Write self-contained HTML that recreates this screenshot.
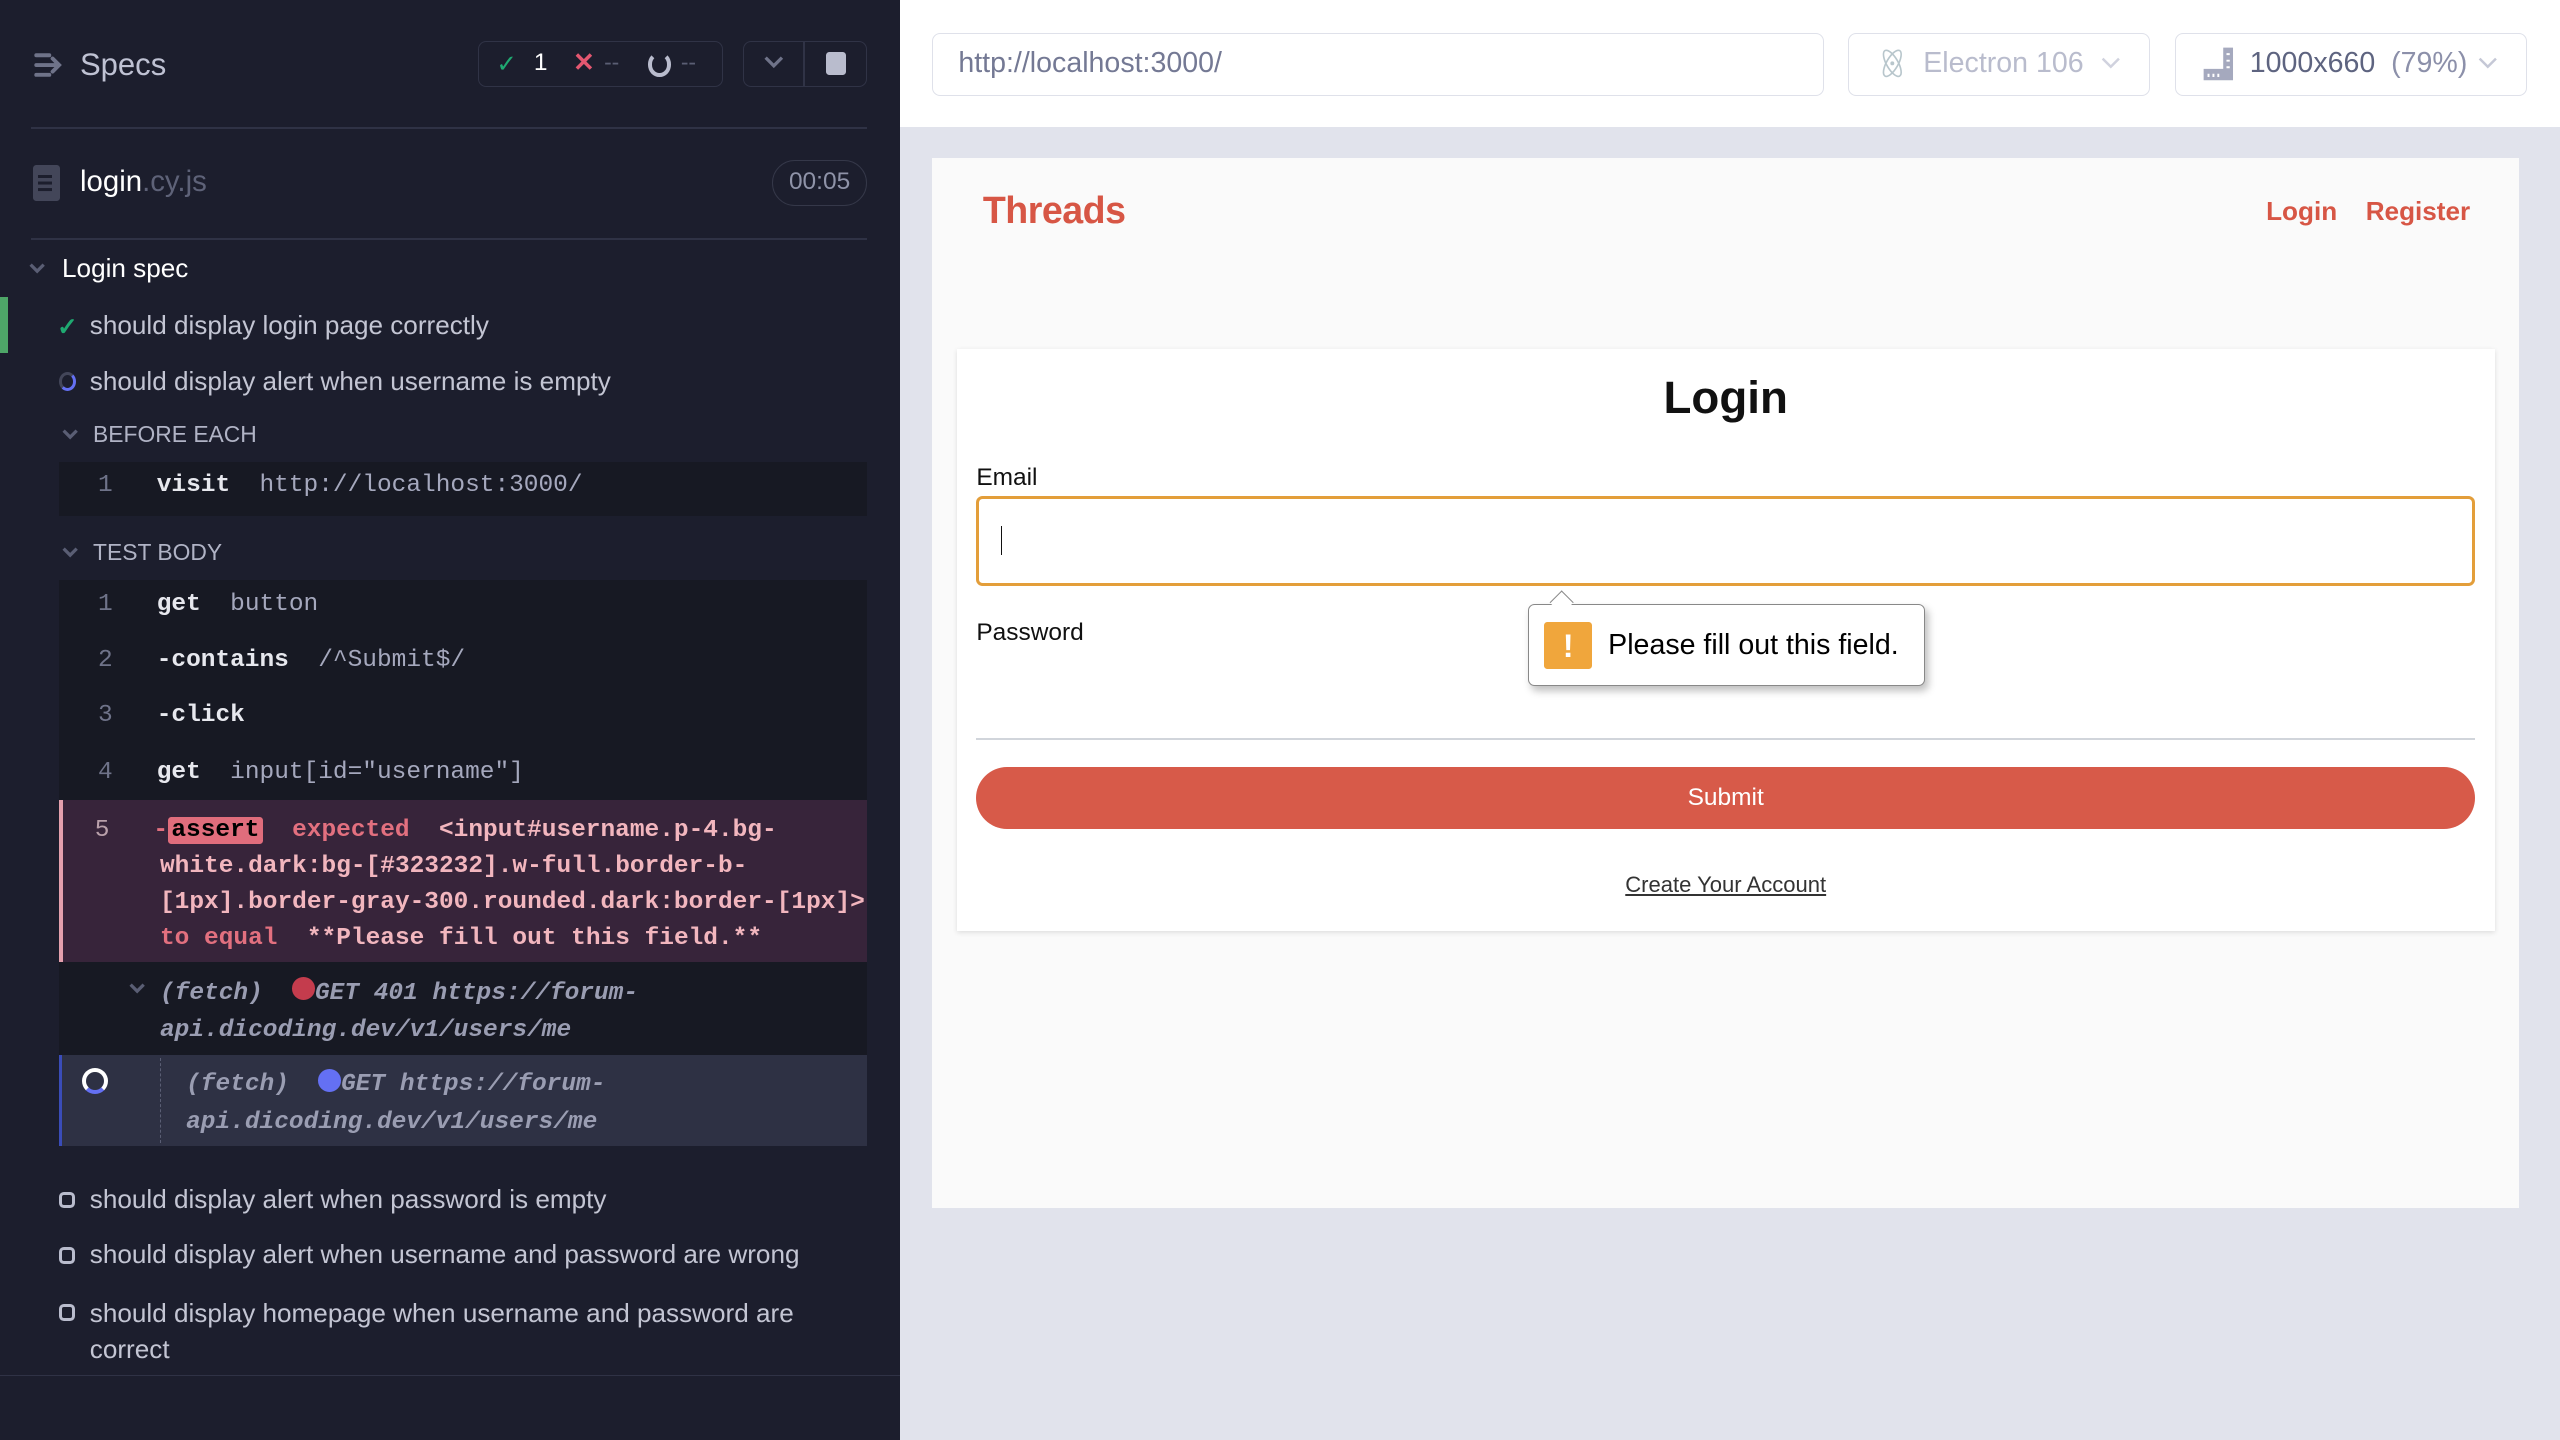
<!DOCTYPE html>
<html><head><meta charset="utf-8"><style>
html,body{margin:0;padding:0;width:2560px;height:1440px;overflow:hidden;background:#1b1e2e}
#w{position:relative;width:1568px;height:882px;zoom:1.632653;font-family:"Liberation Sans",sans-serif;overflow:hidden}
.a{position:absolute}
.left{left:0;top:0;width:551px;height:882px;background:#1c1e2d}
.t{color:#c3c5d3;font-size:16px;white-space:nowrap}
.mono{font-family:"Liberation Mono",monospace;font-size:15px;font-weight:bold;white-space:nowrap}
.row{left:36px;width:495px;background:#171923}
.ln{color:#6f7389;font-weight:normal}
.cmd{color:#e7e8ee}
.arg{color:#a5a8bd;font-weight:normal}
.box{width:10px;height:10px;border:2px solid #b9bccd;border-radius:3px;box-sizing:border-box}
</style></head><body><div id="w">
<div class="a left"></div>
<svg class="a" style="left:20px;top:32px" width="20" height="16" viewBox="0 0 20 16"><g stroke="#6f7389" stroke-width="2.4" stroke-linecap="round" fill="none"><path d="M2 2h8M2 8h13M2 14h8M12 4l4 4-4 4"/></g></svg>
<div class="a t" style="left:49px;top:29px;font-size:19px;color:#bfc2d3">Specs</div>
<div class="a" style="left:293px;top:25px;width:150px;height:28px;border:1px solid #303346;border-radius:5px;box-sizing:border-box"></div>
<div class="a" style="left:304px;top:30px;color:#1fa971;font-size:15px">✓</div>
<div class="a" style="left:327px;top:30px;color:#fff;font-size:15px">1</div>
<div class="a" style="left:351px;top:29px;color:#e45770;font-size:16px;font-weight:bold">✕</div>
<div class="a" style="left:370px;top:30px;color:#5a5e74;font-size:14px">--</div>
<div class="a" style="left:397px;top:32px;width:9px;height:10px;border:2.5px solid #b9bccd;border-radius:50%;border-top-color:transparent"></div>
<div class="a" style="left:417px;top:30px;color:#5a5e74;font-size:14px">--</div>
<div class="a" style="left:455px;top:25px;width:76px;height:28px;border:1px solid #303346;border-radius:5px;box-sizing:border-box"></div>
<div class="a" style="left:492px;top:25px;width:1px;height:28px;background:#303346"></div>
<svg class="a" style="left:468px;top:34px" width="12" height="9"><path d="M1 1l5 5 5-5" stroke="#6f7389" stroke-width="2" fill="none"/></svg>
<div class="a" style="left:506px;top:32px;width:12px;height:14px;background:#b9bccd;border-radius:2px"></div>
<div class="a" style="left:19px;top:78px;width:512px;height:1px;background:#2f3245"></div>
<div class="a" style="left:20px;top:101px;width:17px;height:22px;background:#434659;border-radius:2px"></div>
<div class="a" style="left:23px;top:107px;width:9px;height:2px;background:#1c1e2d;box-shadow:0 4px 0 #1c1e2d,0 8px 0 #1c1e2d"></div>
<div class="a" style="left:49px;top:101px;font-size:18px;color:#fff">login<span style="color:#5e6278">.cy.js</span></div>
<div class="a" style="left:473px;top:98px;width:58px;height:28px;border:1px solid #353849;border-radius:14px;box-sizing:border-box;color:#8f93a8;font-size:15px;text-align:center;line-height:26px">00:05</div>
<div class="a" style="left:19px;top:146px;width:512px;height:1px;background:#2f3245"></div>
<svg class="a" style="left:18px;top:161px" width="10" height="7"><path d="M1 1l4 4 4-4" stroke="#5a5e74" stroke-width="2" fill="none"/></svg>
<div class="a t" style="left:38px;top:155px;font-size:16px;color:#fff">Login spec</div>
<div class="a" style="left:0;top:182px;width:5px;height:34px;background:#4ea668"></div>
<div class="a" style="left:35px;top:191px;color:#1fa971;font-size:15px;font-weight:bold">✓</div>
<div class="a t" style="left:55px;top:190px">should display login page correctly</div>
<div class="a" style="left:36px;top:228px;width:7px;height:8px;border:2px solid #434659;border-radius:50%;border-right-color:#6470f3;border-bottom-color:#6470f3"></div>
<div class="a t" style="left:55px;top:224px">should display alert when username is empty</div>
<svg class="a" style="left:38px;top:263px" width="10" height="7"><path d="M1 1l4 4 4-4" stroke="#5a5e74" stroke-width="2" fill="none"/></svg>
<div class="a t" style="left:57px;top:258px;font-size:14px;color:#b0b3c5">BEFORE EACH</div>
<div class="a row" style="top:283px;height:33px"></div>
<div class="a mono" style="left:60px;top:289px"><span class="ln">1</span>&nbsp;&nbsp;&nbsp;<span class="cmd">visit</span>&nbsp;&nbsp;<span class="arg">http://localhost:3000/</span></div>
<svg class="a" style="left:38px;top:335px" width="10" height="7"><path d="M1 1l4 4 4-4" stroke="#5a5e74" stroke-width="2" fill="none"/></svg>
<div class="a t" style="left:57px;top:330px;font-size:14px;color:#b0b3c5">TEST BODY</div>
<div class="a row" style="top:355px;height:135px"></div>
<div class="a mono" style="left:60px;top:362px"><span class="ln">1</span>&nbsp;&nbsp;&nbsp;<span class="cmd">get</span>&nbsp;&nbsp;<span class="arg">button</span></div>
<div class="a mono" style="left:60px;top:396px"><span class="ln">2</span>&nbsp;&nbsp;&nbsp;<span class="cmd">-contains</span>&nbsp;&nbsp;<span class="arg">/^Submit$/</span></div>
<div class="a mono" style="left:60px;top:430px"><span class="ln">3</span>&nbsp;&nbsp;&nbsp;<span class="cmd">-click</span></div>
<div class="a mono" style="left:60px;top:465px"><span class="ln">4</span>&nbsp;&nbsp;&nbsp;<span class="cmd">get</span>&nbsp;&nbsp;<span class="arg">input[id="username"]</span></div>
<div class="a" style="left:36px;top:490px;width:495px;height:99px;background:#37243a;border-left:3px solid #e4a0ad;box-sizing:border-box"></div>
<div class="a mono" style="left:58px;top:498px;line-height:22px;color:#e2707f;font-weight:bold"><span style="color:#b9a0aa;font-weight:normal">5</span>&nbsp;&nbsp;&nbsp;-<span style="background:#e06d7c;color:#000;border-radius:2px;padding:0 2px">assert</span>&nbsp;&nbsp;expected&nbsp;&nbsp;<span style="color:#f2b6be">&lt;input#username.p-4.bg-</span></div>
<div class="a mono" style="left:98px;top:520px;line-height:22px;color:#f2b6be">white.dark:bg-[#323232].w-full.border-b-<br>[1px].border-gray-300.rounded.dark:border-[1px]&gt;<br><span style="color:#e2707f">to equal</span>&nbsp;&nbsp;**Please fill out this field.**</div>
<div class="a row" style="top:589px;height:57px"></div>
<svg class="a" style="left:79px;top:602px" width="10" height="7"><path d="M1 1l4 4 4-4" stroke="#5a5e74" stroke-width="2" fill="none"/></svg>
<div class="a mono" style="left:98px;top:597px;line-height:23px;color:#9a9db2;font-style:italic">(fetch)&nbsp;&nbsp;<span style="display:inline-block;width:14px;height:14px;border-radius:50%;background:#c43c4d;vertical-align:-1px"></span>GET 401 https://forum-<br>api.dicoding.dev/v1/users/me</div>
<div class="a" style="left:36px;top:646px;width:495px;height:56px;background:#2e3144;border-left:2px solid #3a4cb8;box-sizing:border-box"></div>
<div class="a" style="left:98px;top:648px;width:0;height:52px;border-left:1px dashed #5a5e74"></div>
<div class="a" style="left:50px;top:654px;width:11px;height:11px;border:2.5px solid #fff;border-radius:50%;border-bottom-color:#6470f3"></div>
<div class="a mono" style="left:114px;top:653px;line-height:23px;color:#9a9db2;font-style:italic">(fetch)&nbsp;&nbsp;<span style="display:inline-block;width:14px;height:14px;border-radius:50%;background:#6470f3;vertical-align:-1px"></span>GET https://forum-<br>api.dicoding.dev/v1/users/me</div>
<div class="a box" style="left:36px;top:730px"></div>
<div class="a t" style="left:55px;top:725px">should display alert when password is empty</div>
<div class="a box" style="left:36px;top:764px"></div>
<div class="a t" style="left:55px;top:759px">should display alert when username and password are wrong</div>
<div class="a box" style="left:36px;top:799px"></div>
<div class="a t" style="left:55px;top:794px;line-height:22px">should display homepage when username and password are<br>correct</div>
<div class="a" style="left:0;top:842px;width:551px;height:1px;background:#2f3245"></div>

<div class="a" style="left:551px;top:0;width:1017px;height:882px;background:#e1e3ec"></div>
<div class="a" style="left:551px;top:0;width:1017px;height:78px;background:#fff"></div>
<div class="a" style="left:571px;top:20px;width:546px;height:39px;border:1px solid #dfe1ea;border-radius:5px;box-sizing:border-box"></div>
<div class="a" style="left:587px;top:29px;font-size:17.5px;color:#747994">http://localhost:3000/</div>
<div class="a" style="left:1132px;top:20px;width:185px;height:39px;border:1px solid #dfe1ea;border-radius:5px;box-sizing:border-box"></div>
<svg class="a" style="left:1149px;top:29px" width="20" height="20" viewBox="0 0 20 20"><g fill="none" stroke="#b8c6cc" stroke-width="1"><ellipse cx="10" cy="10" rx="9" ry="3.5" transform="rotate(60 10 10)"/><ellipse cx="10" cy="10" rx="9" ry="3.5" transform="rotate(-60 10 10)"/></g><circle cx="10" cy="10" r="1.2" fill="#b8c6cc"/></svg>
<div class="a" style="left:1178px;top:29px;font-size:17.5px;color:#b9bccd">Electron 106</div>
<svg class="a" style="left:1287px;top:35px" width="12" height="8"><path d="M1 1l5 5 5-5" stroke="#d0d2de" stroke-width="1.5" fill="none"/></svg>
<div class="a" style="left:1332px;top:20px;width:216px;height:39px;border:1px solid #dfe1ea;border-radius:5px;box-sizing:border-box"></div>
<svg class="a" style="left:1349px;top:28px" width="20" height="22" viewBox="0 0 20 22"><path d="M1 14h12V1h6v20H1z" fill="#a5a9be"/><path d="M4 17v2M7 17v2M10 17v2M15 5h2M15 9h2M15 13h2" stroke="#fff" stroke-width="1.2"/></svg>
<div class="a" style="left:1378px;top:29px;font-size:17.5px;color:#5e6480">1000x660 &nbsp;<span style="color:#8c90aa">(79%)</span></div>
<svg class="a" style="left:1518px;top:35px" width="12" height="8"><path d="M1 1l5 5 5-5" stroke="#c5c8d6" stroke-width="1.5" fill="none"/></svg>

<div class="a" style="left:571px;top:97px;width:972px;height:643px;background:#fafafa"></div>
<div class="a" style="left:602px;top:116px;font-size:23px;font-weight:bold;color:#d75645;letter-spacing:-0.3px">Threads</div>
<div class="a" style="left:1388px;top:120px;font-size:16px;font-weight:bold;color:#d75645">Login</div>
<div class="a" style="left:1449px;top:120px;font-size:16px;font-weight:bold;color:#d75645">Register</div>
<div class="a" style="left:586px;top:214px;width:942px;height:356px;background:#fff;box-shadow:0 1px 3px rgba(0,0,0,.12)"></div>
<div class="a" style="left:586px;top:228px;width:942px;text-align:center;font-size:28px;font-weight:bold;color:#111">Login</div>
<div class="a" style="left:598px;top:284px;font-size:15px;color:#111">Email</div>
<div class="a" style="left:598px;top:304px;width:918px;height:55px;border:2px solid #e39e3a;border-radius:4px;box-sizing:border-box;background:#fff"></div>
<div class="a" style="left:613px;top:322px;width:1px;height:18px;background:#111"></div>
<div class="a" style="left:598px;top:379px;font-size:15px;color:#111">Password</div>
<div class="a" style="left:598px;top:452px;width:918px;height:1px;background:#d1d5db"></div>
<div class="a" style="left:598px;top:470px;width:918px;height:38px;border-radius:19px;background:#d75a49;color:#fff;font-size:15px;text-align:center;line-height:38px">Submit</div>
<div class="a" style="left:586px;top:534px;width:942px;text-align:center;font-size:13.5px;color:#333;text-decoration:underline">Create Your Account</div>
<div class="a" style="left:936px;top:370px;width:243px;height:50px;background:#fff;border:1px solid #888;border-radius:4px;box-sizing:border-box;box-shadow:2px 3px 5px rgba(0,0,0,.25)"></div>
<div class="a" style="left:951px;top:364px;width:10px;height:10px;background:#fff;border-left:1px solid #888;border-top:1px solid #888;transform:rotate(45deg)"></div>
<div class="a" style="left:946px;top:381px;width:29px;height:29px;background:#f0a63c;border-radius:2px;color:#fff;font-weight:bold;font-size:20px;text-align:center;line-height:29px">!</div>
<div class="a" style="left:985px;top:385px;font-size:17.5px;color:#000">Please fill out this field.</div>
</div></body></html>
